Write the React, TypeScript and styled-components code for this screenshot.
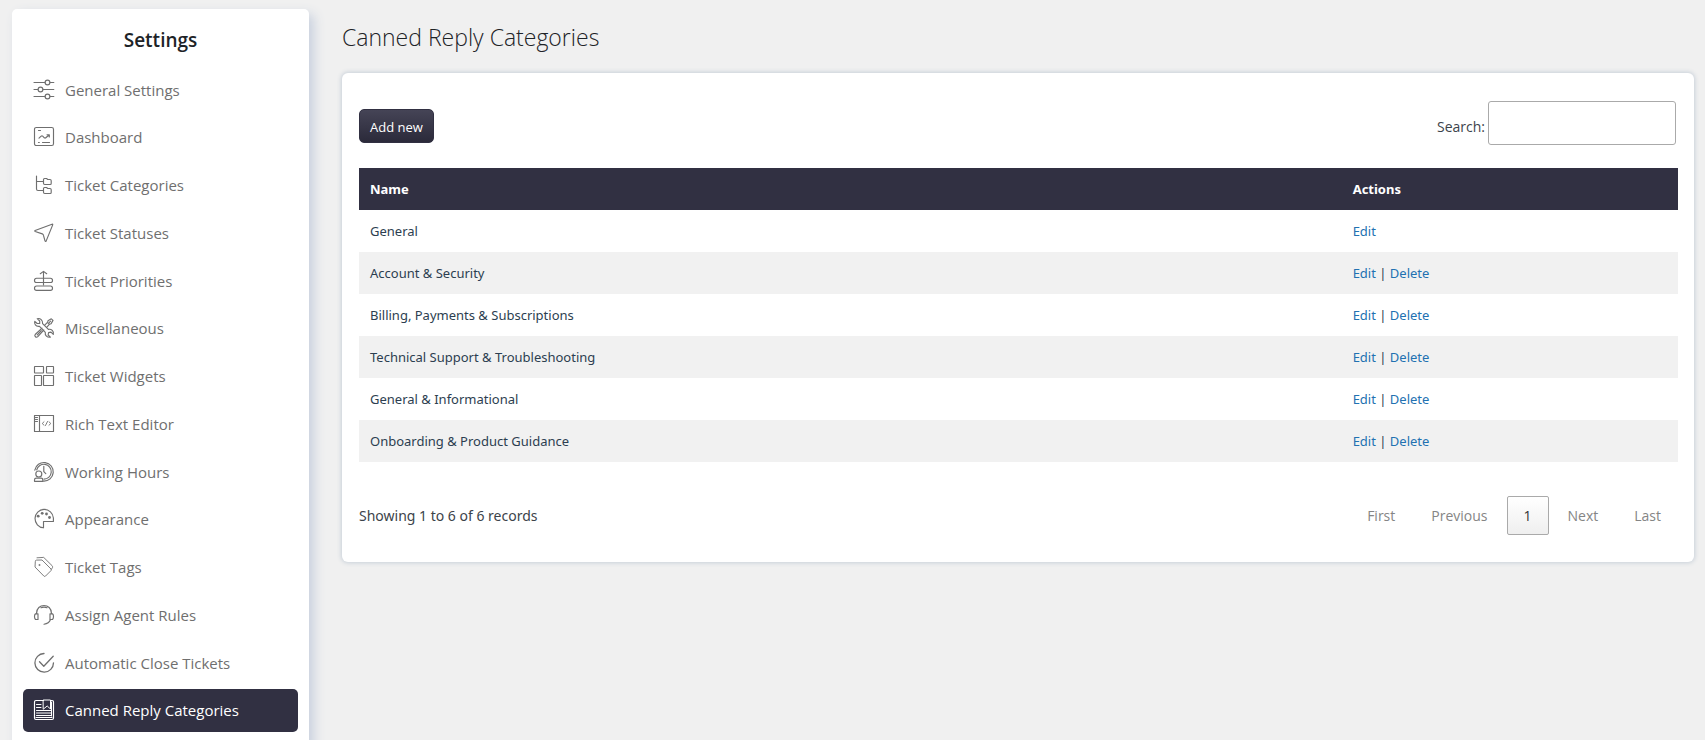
import React from "react";
import styled, { createGlobalStyle } from "styled-components";

const GlobalStyle = createGlobalStyle`
  *, *::before, *::after { box-sizing: border-box; }
  body {
    margin: 0;
    background: #f0f0f0;
    color: #2c3e50;
    font-family: "Segoe UI", "Open Sans", "Noto Sans", sans-serif;
    font-size: 14px;
  }
`;

const textFont = `"Segoe UI", "Noto Sans", "Open Sans", sans-serif`;

const Page = styled.div`
  display: flex;
  align-items: flex-start;
  gap: 33px;
  height: 100vh;
  padding: 9px 11px 0 12px;
  overflow: hidden;
`;

const Sidebar = styled.nav`
  flex: 0 0 297px;
  min-height: 100vh;
  padding: 15px 11px;
  background: #fff;
  border-radius: 5px;
  box-shadow: 5px 5px 12px #c8d0de;
`;

const SidebarTitle = styled.h2`
  margin: 0 0 12px;
  color: #1d2327;
  font-size: 19px;
  font-weight: 600;
  line-height: 32px;
  text-align: center;
`;

const Menu = styled.ul`
  display: flex;
  flex-direction: column;
  justify-content: space-between;
  min-height: 664px;
  margin: 0;
  padding: 0;
  list-style: none;
`;

const MenuLink = styled.a<{ $active?: boolean }>`
  display: flex;
  align-items: center;
  gap: 11px;
  height: 43px;
  padding: 0 11px;
  border-radius: 5px;
  background: ${(p) => (p.$active ? "#313042" : "transparent")};
  color: ${(p) => (p.$active ? "#fff" : "#6f6f6f")};
  font-size: 15px;
  line-height: 24px;
  text-decoration: none;
  white-space: nowrap;
`;

const Icon = styled.svg`
  flex: none;
  width: 20px;
  height: 20px;
  overflow: visible;
  fill: none;
  stroke: currentColor;
  stroke-width: 1.15;
  stroke-linecap: round;
  stroke-linejoin: round;
`;

const Main = styled.main`
  flex: 1;
  min-width: 0;
`;

const PageTitle = styled.h1`
  margin: 12px 0 20px;
  color: #1d2327;
  font-size: 23px;
  font-weight: 300;
  line-height: 32px;
`;

const Card = styled.section`
  padding: 28px 16px 27px 17px;
  background: #fff;
  border-radius: 6px;
  box-shadow: 0 0 4px 1px #c8d0d9;
`;

const Toolbar = styled.div`
  display: flex;
  align-items: center;
  justify-content: space-between;
  padding: 0 2px 0 0;
  margin-bottom: 23px;
`;

const AddButton = styled.button`
  height: 34px;
  margin-top: 6px;
  padding: 2px 10px 0;
  border: 1px solid #313042;
  border-radius: 5px;
  background: linear-gradient(#454456, #2b2a3a);
  color: #fff;
  font-family: inherit;
  font-size: 13px;
  font-weight: 500;
`;

const SearchField = styled.label`
  display: flex;
  align-items: center;
  gap: 3px;
  color: #3c434a;
  line-height: 24px;

  span { padding-top: 8px; }
`;

const SearchInput = styled.input`
  width: 188px;
  height: 44px;
  padding: 5px;
  border: 1px solid #aaa;
  border-radius: 3px;
  background: transparent;
  font: inherit;
`;

const Table = styled.table`
  width: 100%;
  border-collapse: collapse;
  table-layout: fixed;
  font-family: ${textFont};
  font-size: 13px;
  line-height: 18px;

  th, td { padding: 12px 11px; text-align: left; }
  th { background: #313042; color: #fff; font-weight: 700; }
  th:first-child { width: 74.5%; }
  tbody tr:nth-child(even) { background: #f1f1f1; }
`;

const ActionLink = styled.a`
  color: #2271b1;
  text-decoration: none;
`;

const Footer = styled.div`
  display: flex;
  align-items: center;
  justify-content: space-between;
  margin-top: 34px;
  color: #3c434a;
  line-height: 24px;
`;

const RecordCount = styled.span`
  font-family: ${textFont};
`;

const Pager = styled.div`
  display: flex;
  gap: 2px;
`;

const PageButton = styled.button<{ $current?: boolean }>`
  height: 39px;
  padding: 1px 16px 0;
  border: 1px solid ${(p) => (p.$current ? "#aaa" : "transparent")};
  border-radius: 2px;
  background: ${(p) => (p.$current ? "linear-gradient(#fff, #efefef)" : "transparent")};
  color: ${(p) => (p.$current ? "#333" : "#858585")};
  font: inherit;
`;

const menu: { label: string; icon: React.ReactNode }[] = [
  {
    label: "General Settings",
    icon: (
      <>
        <path d="M0 2.5h11M16 2.5h3.8M0 9.5h4M9 9.5h10.8M0 16.5h11M16 16.5h3.8" />
        <circle cx="13.5" cy="2.5" r="2.4" />
        <circle cx="6.5" cy="9.5" r="2.4" />
        <circle cx="13.5" cy="16.5" r="2.4" />
      </>
    ),
  },
  {
    label: "Dashboard",
    icon: (
      <>
        <rect x=".5" y=".5" width="19" height="18" rx="1.8" />
        <path d="M4.5 3.5h2M4.5 15.5h.8M8.5 15.5h7M5 11.2l2.2-2.1q.8-.6 1.5.1l1.6 1.6q.8.6 1.5 0L15 8M13 7.7h2.3V10" />
      </>
    ),
  },
  {
    label: "Ticket Categories",
    icon: (
      <>
        <path d="M2.5 1v13q0 1.5 1.5 1.5h5M2.5 6.5H9" />
        <path d="M9.5 4.5q0-1 1-1h2l1.3 1H16q1.2 0 1.2 1.2v2.8q0 1-1 1h-5.5q-1.2 0-1.2-1.2z" />
        <path d="M9.5 13.5q0-1 1-1h2l1.3 1H16q1.2 0 1.2 1.2v2.8q0 1-1 1h-5.5q-1.2 0-1.2-1.2z" />
      </>
    ),
  },
  {
    label: "Ticket Statuses",
    icon: <path d="M1.1 7.5 18 1.2q.9-.3.7.7l-6.5 16q-.7 1.2-1.2 0L9.4 12.2q-.2-.9-1.1-1.3L1.2 8.5q-.8-.5-.1-1z" />,
  },
  {
    label: "Ticket Priorities",
    icon: (
      <>
        <path d="M9.5 14V.5M6.3 2.7 9.5.4l3.2 2.3" />
        <rect x=".5" y="7.2" width="18" height="4.3" rx="2.1" />
        <rect x=".5" y="15" width="18" height="4.3" rx="2.1" />
      </>
    ),
  },
  {
    label: "Miscellaneous",
    icon: (
      <>
        <path d="M3.2.7 5.7 3v2.5H3.2L.8 3.3C0 5.8 1.6 8.9 5.5 8.3l5.8 6c-.6 3 1.9 5.4 5.1 4.8L14.1 17l.5-2.4 2.4-.5 2.3 2.2c.8-3.2-2-5.6-4.9-4.9L8.6 5.6C9 2.3 6.2-.2 3.2.7z" />
        <path d="m10.5 7.3 3.2-3.1.3-1.5L17.3.8l1.7 1.6-1.9 3.4-1.5.3-3 3.2M8 10.2l-6.8 6.3c-1.2 1.6 1 3.7 2.6 2.2l6-6.7M3.3 16.9l4-4.2M14.2 5.6l2.4-2.4" />
      </>
    ),
  },
  {
    label: "Ticket Widgets",
    icon: (
      <>
        <rect x=".5" y=".5" width="9" height="6.5" rx=".4" />
        <rect x="12.5" y=".5" width="7" height="6.5" rx=".4" />
        <rect x=".5" y="9.5" width="7" height="10" rx=".4" />
        <rect x="9.5" y="9.5" width="10" height="10" rx=".4" />
      </>
    ),
  },
  {
    label: "Rich Text Editor",
    icon: (
      <>
        <path d="M.5 1.5h19v16H.5zM5.5 1.5v16M1.5 3.5h2M1.5 5.5h2M1.5 7.5h2" />
        <path d="m10 7.8-1.8 1.7 1.8 1.7M15 7.8l1.8 1.7-1.8 1.7M13.5 7.5l-2 4" strokeWidth=".9" />
      </>
    ),
  },
  {
    label: "Working Hours",
    icon: (
      <>
        <path d="M.8 8.2A9.3 9.3 0 1 1 9.5 19.1" />
        <path d="M2.7 7.8A7.4 7.4 0 1 1 10 17.1M9.8 4.2v5.5l2 2" />
        <circle cx="4.8" cy="12" r="3" />
        <path d="M.5 19.3v-1.4q0-1.8 1.8-1.8h4.9q1.6 0 1.6 1.8v1.4z" />
      </>
    ),
  },
  {
    label: "Appearance",
    icon: (
      <>
        <path d="M9.5 18.8A9.2 9.2 0 1 1 19.4 9v3.5H9.5z" />
        <g fill="currentColor" stroke="none">
          <circle cx="4.2" cy="7.2" r="1.4" />
          <circle cx="8.2" cy="4.3" r="1.4" />
          <circle cx="12.5" cy="5" r="1.4" />
          <circle cx="15.5" cy="8.5" r="1.4" />
        </g>
      </>
    ),
  },
  {
    label: "Ticket Tags",
    icon: (
      <g strokeWidth=".9">
        <path d="M1.3 4.3q0-1.2 1.2-1.2L8 3l9 9q.8.8 0 1.6l-5.5 5.5q-.8.7-1.6 0l-8.6-8.8zM3 .8 9.7.4l8.4 8.3q.8 1 .4 2l-1.2 1.6" />
        <circle cx="5.3" cy="8" r=".5" />
      </g>
    ),
  },
  {
    label: "Assign Agent Rules",
    icon: (
      <>
        <path d="M2.5 8.5C2.5-2.2 17.5-2.2 17.5 8.5M7 2.7q3-1.3 6 0M16.5 14.5q-1.5 4-6.5 4.7" />
        <path d="M4 8.8v5.7H1.5Q.5 13.5.5 11.6t1-2.8zM16 8.8v5.7h2.5q1-1 1-2.9t-1-2.8z" />
      </>
    ),
  },
  {
    label: "Automatic Close Tickets",
    icon: <path d="M10 .5a9.3 9.3 0 1 0 9.5 9.3M5.5 8.8l4.3 4.4 9.4-10" strokeWidth="1.3" />,
  },
  {
    label: "Canned Reply Categories",
    icon: (
      <>
        <path d="M9.5.5H2Q.5.5.5 2v16q0 1.5 1.5 1.5h16q1.5 0 1.5-1.5V2Q19.5.5 18 .5h-1.5" />
        <path d="M9.5 0h7v9l-3.3-3-3.7 3zM2 17.5h16M2.5 4.5H7M2.5 7.5H7M2.5 10.5h15M2.5 13h15M2.5 15.5h15M17.5 2v14" strokeWidth="1" />
      </>
    ),
  },
];

const categories = [
  "General",
  "Account & Security",
  "Billing, Payments & Subscriptions",
  "Technical Support & Troubleshooting",
  "General & Informational",
  "Onboarding & Product Guidance",
];

export default function App() {
  return (
    <>
      <GlobalStyle />
      <Page>
        <Sidebar aria-label="Settings">
          <SidebarTitle>Settings</SidebarTitle>
          <Menu>
            {menu.map(({ label, icon }) => {
              const active = label === "Canned Reply Categories";
              return (
                <li key={label}>
                  <MenuLink href="#" $active={active} aria-current={active ? "page" : undefined}>
                    <Icon viewBox="0 0 20 20" aria-hidden="true">{icon}</Icon>
                    {label}
                  </MenuLink>
                </li>
              );
            })}
          </Menu>
        </Sidebar>
        <Main>
          <PageTitle>Canned Reply Categories</PageTitle>
          <Card>
            <Toolbar>
              <AddButton type="button">Add new</AddButton>
              <SearchField>
                <span>Search:</span>
                <SearchInput type="search" />
              </SearchField>
            </Toolbar>
            <Table>
              <thead>
                <tr>
                  <th scope="col">Name</th>
                  <th scope="col">Actions</th>
                </tr>
              </thead>
              <tbody>
                {categories.map((name, i) => (
                  <tr key={name}>
                    <td>{name}</td>
                    <td>
                      <ActionLink href="#">Edit</ActionLink>
                      {i > 0 && (
                        <>
                          {" | "}
                          <ActionLink href="#">Delete</ActionLink>
                        </>
                      )}
                    </td>
                  </tr>
                ))}
              </tbody>
            </Table>
            <Footer>
              <RecordCount>Showing 1 to 6 of 6 records</RecordCount>
              <Pager>
                <PageButton type="button">First</PageButton>
                <PageButton type="button">Previous</PageButton>
                <PageButton type="button" $current>1</PageButton>
                <PageButton type="button">Next</PageButton>
                <PageButton type="button">Last</PageButton>
              </Pager>
            </Footer>
          </Card>
        </Main>
      </Page>
    </>
  );
}
